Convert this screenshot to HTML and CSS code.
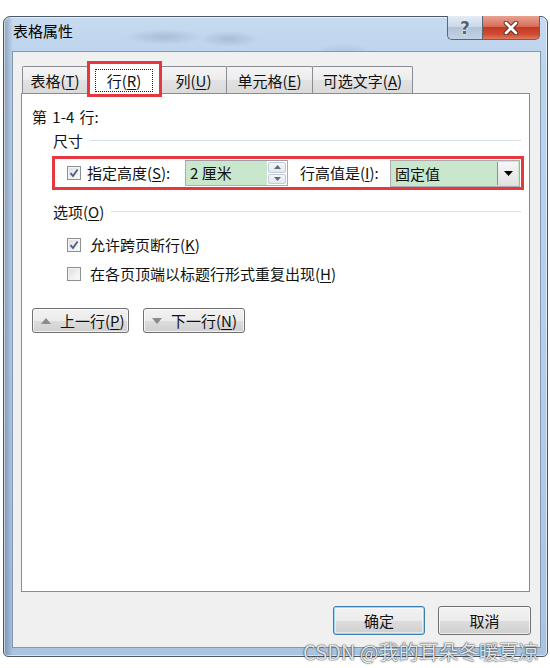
FILE: index.html
```html
<!DOCTYPE html>
<html lang="zh-CN">
<head>
<meta charset="utf-8">
<title>表格属性</title>
<link rel="stylesheet" href="styles.css">
</head>
<body>
<div class="window">
  <div class="titlebar">
    <span class="title">表格属性</span>
    <div class="caption">
      <div class="cbtn help">?</div>
      <div class="cbtn close">
        <svg width="18" height="14" viewBox="0 0 18 14"><path d="M4 2 L14 12 M14 2 L4 12" stroke="#5a2a22" stroke-width="4.6" stroke-linecap="round"/><path d="M4 2 L14 12 M14 2 L4 12" stroke="#fff" stroke-width="2.8" stroke-linecap="round"/></svg>
      </div>
    </div>
  </div>
  <div class="client">
    <div class="tabs">
      <div class="tab t1">表格(<u>T</u>)</div>
      <div class="tab active"><span class="focus">行(<u>R</u>)</span><span class="redbox"></span></div>
      <div class="tab t3">列(<u>U</u>)</div>
      <div class="tab t4">单元格(<u>E</u>)</div>
      <div class="tab t5">可选文字(<u>A</u>)</div>
    </div>
    <div class="panel">
      <div class="rows-label">第 1-4 行:</div>
      <div class="group-title size-title"><span>尺寸</span><span class="rule"></span></div>
      <div class="size-row">
        <span class="cb checked"><svg width="10" height="10" viewBox="0 0 10 10"><path d="M1.5 5.2 L4 8 L8.6 1.5" stroke="#4b5c8e" stroke-width="1.8" fill="none"/></svg></span>
        <span class="lbl lbl1">指定高度(<u>S</u>):</span>
        <div class="num">
          <span class="num-val">2 厘米</span>
          <span class="spin">
            <span class="spin-half"><svg width="7" height="4" viewBox="0 0 7 4"><path d="M0 4 L3.5 0 L7 4Z" fill="#5d6b7c"/></svg></span>
            <span class="spin-half"><svg width="7" height="4" viewBox="0 0 7 4"><path d="M0 0 L3.5 4 L7 0Z" fill="#5d6b7c"/></svg></span>
          </span>
        </div>
        <span class="lbl lbl2">行高值是(<u>I</u>):</span>
        <div class="select">
          <span class="sel-val">固定值</span>
          <span class="drop"><svg width="9" height="5" viewBox="0 0 9 5"><path d="M0 0 L9 0 L4.5 5Z" fill="#000"/></svg></span>
        </div>
      </div>
      <div class="group-title opt-title"><span>选项(<u>O</u>)</span><span class="rule"></span></div>
      <div class="opt opt1">
        <span class="cb checked"><svg width="10" height="10" viewBox="0 0 10 10"><path d="M1.5 5.2 L4 8 L8.6 1.5" stroke="#4b5c8e" stroke-width="1.8" fill="none"/></svg></span>
        <span class="opt-text">允许跨页断行(<u>K</u>)</span>
      </div>
      <div class="opt opt2">
        <span class="cb"></span>
        <span class="opt-text">在各页顶端以标题行形式重复出现(<u>H</u>)</span>
      </div>
      <div class="nav">
        <div class="btn navbtn prev"><svg width="10" height="6" viewBox="0 0 10 6"><path d="M0 6 L5 0 L10 6Z" fill="#8a8a8a"/></svg><span>上一行(<u>P</u>)</span></div>
        <div class="btn navbtn next"><svg width="10" height="6" viewBox="0 0 10 6"><path d="M0 0 L5 6 L10 0Z" fill="#8a8a8a"/></svg><span>下一行(<u>N</u>)</span></div>
      </div>
    </div>
    <div class="footer">
      <div class="btn dlg ok">确定</div>
      <div class="btn dlg cancel">取消</div>
    </div>
  </div>
  <div class="watermark">CSDN @我的耳朵冬暖夏凉</div>
</div>
</body>
</html>
```
FILE: styles.css
```css
* { box-sizing: border-box; }
html, body { margin: 0; }
body {
  padding: 16px 0 0 3px;
  width: 550px;
  height: 668px;
  overflow: hidden;
  background: #fff;
  font: 15px/20px "Noto Sans CJK SC", "Noto Sans", sans-serif;
  color: #111;
}
u { text-decoration: underline; text-underline-offset: 2px; text-decoration-thickness: 1px; }

.window {
  position: relative;
  width: 545px;
  height: 641px;
  border: 1px solid #4d5866;
  border-radius: 7px 7px 5px 5px;
  padding: 0 6px 8px 8px;
  display: flex;
  flex-direction: column;
  background:
    radial-gradient(ellipse 40px 8px at 160px 20px, rgba(120,140,170,.35), transparent),
    radial-gradient(ellipse 30px 8px at 225px 22px, rgba(120,140,170,.35), transparent),
    radial-gradient(ellipse 20px 8px at 230px 40px, rgba(120,140,170,.25), transparent),
    radial-gradient(ellipse 30px 10px at 340px 36px, rgba(120,140,170,.25), transparent),
    linear-gradient(90deg, rgba(40,60,90,.35) 0, rgba(40,60,90,0) 9px),
    linear-gradient(180deg, #c6daf0 0%, #bcd3ec 8%, #b6cee9 50%, #a9c3e0 100%);
  box-shadow: inset 0 0 0 1px rgba(255,255,255,.55);
}

.titlebar {
  height: 34px;
  display: flex;
  justify-content: space-between;
  align-items: flex-start;
}
.title {
  margin: 4px 0 0 1px;
  font-size: 15px;
  color: #000;
}
.caption {
  display: flex;
  margin-top: -1px;
  margin-right: 1px;
}
.cbtn {
  height: 24px;
  border: 1px solid #5b6674;
  border-top: none;
  display: flex;
  align-items: center;
  justify-content: center;
}
.help {
  width: 35px;
  border-radius: 0 0 0 5px;
  border-right: none;
  background: linear-gradient(180deg, #e4ecf5 0%, #ccd9e8 45%, #b2c3d8 50%, #c3d3e6 100%);
  font: bold 17px/20px "DejaVu Sans", sans-serif;
  color: #566172;
  text-shadow: 0 0 2px #fff, 0 0 1px #fff;
}
.close {
  width: 58px;
  border-radius: 0 0 5px 0;
  background: linear-gradient(180deg, #e8a291 0%, #d9705b 45%, #c23a24 50%, #d14c31 80%, #e07b5e 100%);
}

.client {
  flex: 1;
  border: 1px solid #8397ae;
  background: #f0f0f0;
  padding: 10px 10px 0 8px;
  display: flex;
  flex-direction: column;
}

.tabs {
  height: 31px;
  display: flex;
  align-items: flex-end;
  padding-left: 1px;
  position: relative;
  z-index: 2;
}
.tab {
  height: 27px;
  border: 1px solid #898c95;
  border-bottom: none;
  border-radius: 2px 2px 0 0;
  background: linear-gradient(180deg, #f4f4f4 0%, #ececec 50%, #e2e2e2 51%, #dadada 100%);
  display: flex;
  align-items: center;
  justify-content: center;
  padding-top: 1px;
  color: #111;
}
.tab + .tab { margin-left: -1px; }
.t1 { width: 66px; }
.t3 { width: 67px; }
.t4 { width: 87px; }
.t5 { width: 101px; }
.tab.active {
  position: relative;
  z-index: 3;
  width: 74px;
  height: 32px;
  margin-bottom: -1px;
  background: #fff;
  padding-top: 3px;
}
.focus {
  border: 1px dotted #222;
  padding: 0 11px;
  height: 23px;
  line-height: 21px;
}
.redbox {
  position: absolute;
  left: -1px;
  top: -2px;
  right: -2px;
  bottom: -3px;
  border: 3px solid #e5373d;
}

.panel {
  height: 499px;
  border: 1px solid #898c95;
  background: #fff;
  padding: 13px 8px 0 10px;
  display: flex;
  flex-direction: column;
  position: relative;
  z-index: 1;
}
.rows-label { height: 20px; word-spacing: 2px; }
.group-title {
  display: flex;
  align-items: center;
  gap: 7px;
  margin-left: 21px;
  height: 20px;
}
.rule {
  flex: 1;
  height: 2px;
  border-top: 1px solid #d5dfe5;
  border-bottom: 1px solid #fff;
}
.size-title { margin-top: 4px; }

.size-row {
  margin: 5px 0 0 20px;
  width: 472px;
  height: 34px;
  border: 3px solid #e5373d;
  display: flex;
  align-items: center;
  padding-left: 12px;
}
.cb {
  width: 14px;
  height: 14px;
  border: 1px solid #8e8f8f;
  background: linear-gradient(135deg, #dcdcdc 0%, #f4f4f4 70%, #fff 100%);
  box-shadow: inset 0 0 0 1px #f4f4f4;
  display: flex;
  align-items: center;
  justify-content: center;
  flex: none;
}
.lbl1 { width: 98px; margin-left: 6px; }
.lbl2 { width: 90px; margin-left: 12px; }
.num {
  width: 103px;
  height: 26px;
  border: 1px solid #abadb3;
  border-top-color: #9a9ea8;
  display: flex;
  background: #fff;
}
.num-val {
  flex: 1;
  background: #c9e7cc;
  padding-left: 4px;
  line-height: 24px;
}
.spin {
  width: 20px;
  display: flex;
  flex-direction: column;
  gap: 1px;
  padding: 1px;
  background: #fff;
}
.spin-half {
  flex: 1;
  border: 1px solid #c3cbd6;
  border-radius: 2px;
  background: linear-gradient(180deg, #f3f6f9, #e3e9ef);
  display: flex;
  align-items: center;
  justify-content: center;
}
.select {
  width: 130px;
  height: 27px;
  border: 1px solid #abadb3;
  display: flex;
  background: #c9e7cc;
}
.sel-val {
  flex: 1;
  padding-left: 4px;
  line-height: 25px;
}
.drop {
  width: 21px;
  border-left: 1px solid #8b8f96;
  background: linear-gradient(180deg, #f6f6f6, #e2e2e2);
  display: flex;
  align-items: center;
  justify-content: center;
  margin: 1px;
}

.opt-title { margin-top: 12px; }
.opt {
  display: flex;
  align-items: center;
  margin-left: 35px;
  height: 20px;
}
.opt .cb { margin-right: 9px; }
.opt1 { margin-top: 13px; }
.opt2 { margin-top: 9px; }

.btn {
  border: 1px solid #707070;
  border-radius: 3px;
  background: linear-gradient(180deg, #f2f2f2 0%, #ebebeb 50%, #dddddd 51%, #cfcfcf 100%);
  box-shadow: inset 0 0 0 1px rgba(255,255,255,.7);
  display: flex;
  align-items: center;
}
.nav {
  display: flex;
  gap: 14px;
  margin-top: 24px;
}
.navbtn {
  height: 25px;
  padding-left: 8px;
  gap: 9px;
}
.prev { width: 97px; }
.next { width: 102px; }

.footer {
  display: flex;
  justify-content: flex-end;
  gap: 13px;
  margin: 14px -1px 0 0;
}
.dlg {
  height: 29px;
  justify-content: center;
}
.ok {
  width: 92px;
  border-color: #3c7fb1;
  box-shadow: inset 0 0 0 1px #9bd7f2, inset 0 0 0 2px rgba(255,255,255,.5);
}
.cancel { width: 93px; }

.watermark {
  position: absolute;
  left: 299px;
  bottom: -8px;
  font-size: 20px;
  line-height: 24px;
  color: rgba(255,255,255,.9);
  text-shadow: 0 0 1px rgba(0,0,0,.9), 0 0 2px rgba(0,0,0,.5);
  white-space: nowrap;
  z-index: 5;
}
```
